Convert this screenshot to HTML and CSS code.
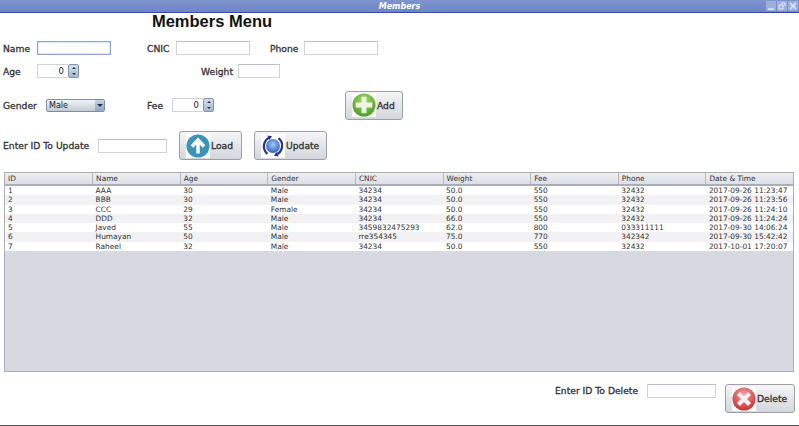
FILE: index.html
```html
<!DOCTYPE html>
<html>
<head>
    <title>Members</title>
    <link rel="stylesheet" href="styles.css">
</head>
<body>
    <!-- window title bar -->
    <div class="titlebar">
        <span class="titlebar-text">Members</span>
        <div class="winbtns">
            <span class="winbtn"><svg viewBox="0 0 10 10" width="10" height="10"><path d="M2 8h6" stroke="#e8eefa" stroke-width="1.4"/></svg></span>
            <span class="winbtn"><svg viewBox="0 0 10 10" width="10" height="10"><path d="M4 2h4v3M2 4h4v4H2z" fill="none" stroke="#e8eefa"/></svg></span>
            <span class="winbtn"><svg viewBox="0 0 10 10" width="10" height="10"><path d="M2 2l6 6M8 2L2 8" stroke="#e8eefa" stroke-width="1.3"/></svg></span>
        </div>
    </div>

    <h1>Members Menu</h1>

    <!-- form -->
    <div class="row row-first">
        <label class="lbl w34">Name</label>
        <input class="field w74 focused" type="text">
        <label class="lbl w29 ml36">CNIC</label>
        <input class="field w74" type="text">
        <label class="lbl w34 ml20">Phone</label>
        <input class="field w74" type="text">
    </div>

    <div class="row row-age">
        <label class="lbl w34">Age</label>
        <div class="spinner">
            <input class="spin-value" type="text" value="0">
            <div class="spin-btns"><span class="up"></span><span class="down"></span></div>
        </div>
        <label class="lbl w37 ml122">Weight</label>
        <input class="field w42" type="text">
    </div>

    <div class="row row-gender">
        <label class="lbl w43">Gender</label>
        <div class="combo">
            <span class="combo-text">Male</span>
            <span class="combo-arrow"></span>
        </div>
        <label class="lbl w25 ml42">Fee</label>
        <div class="spinner">
            <input class="spin-value" type="text" value="0">
            <div class="spin-btns"><span class="up"></span><span class="down"></span></div>
        </div>
        <button class="btn btn-add">
            <svg class="icon" viewBox="0 0 26 26">
                <defs><radialGradient id="g1" cx="50%" cy="30%" r="75%"><stop offset="0" stop-color="#a6d86a"/><stop offset="1" stop-color="#3f9a1e"/></radialGradient></defs>
                <circle cx="13" cy="13" r="12.500" fill="url(#g1)"/>
                <path d="M13 4v18M4 13h18" stroke="#eef5e4" stroke-width="5.500"/>
            </svg>
            Add
        </button>
    </div>

    <div class="row row-update">
        <label class="lbl w95">Enter ID To Update</label>
        <input class="field w69" type="text">
        <button class="btn btn-load">
            <svg class="icon" viewBox="0 0 26 26">
                <circle cx="13" cy="13" r="12.500" fill="#3a94b8"/>
                <path d="M13 21V8M6.500 13.500L13 6.500l6.500 7" fill="none" stroke="#fff" stroke-width="3.800"/>
            </svg>
            Load
        </button>
        <button class="btn btn-update">
            <svg class="icon" viewBox="0 0 26 26">
                <defs><radialGradient id="g2" cx="50%" cy="40%" r="60%"><stop offset="0" stop-color="#a9c8f2"/><stop offset="1" stop-color="#2d63c0"/></radialGradient></defs>
                <circle cx="13" cy="13" r="7.500" fill="url(#g2)"/>
                <path d="M10 3.500A10.500 10.500 0 0 0 7 21.500M16 22.500A10.500 10.500 0 0 0 19 4.500" fill="none" stroke="#27358c" stroke-width="2.400"/>
                <path d="M7 1.500l5 1-3 4zM19 24.500l-5-1 3-4z" fill="#27358c"/>
            </svg>
            Update
        </button>
    </div>

    <!-- members table -->
    <div class="table-wrap">
        <table>
            <thead>
                <tr><th>ID</th><th>Name</th><th>Age</th><th>Gender</th><th>CNIC</th><th>Weight</th><th>Fee</th><th>Phone</th><th>Date &amp; Time</th></tr>
            </thead>
            <tbody>
                <tr><td>1</td><td>AAA</td><td>30</td><td>Male</td><td>34234</td><td>50.0</td><td>550</td><td>32432</td><td>2017-09-26 11:23:47</td></tr>
                <tr><td>2</td><td>BBB</td><td>30</td><td>Male</td><td>34234</td><td>50.0</td><td>550</td><td>32432</td><td>2017-09-26 11:23:56</td></tr>
                <tr><td>3</td><td>CCC</td><td>29</td><td>Female</td><td>34234</td><td>50.0</td><td>550</td><td>32432</td><td>2017-09-26 11:24:10</td></tr>
                <tr><td>4</td><td>DDD</td><td>32</td><td>Male</td><td>34234</td><td>66.0</td><td>550</td><td>32432</td><td>2017-09-26 11:24:24</td></tr>
                <tr><td>5</td><td>Javed</td><td>55</td><td>Male</td><td>3459832475293</td><td>62.0</td><td>800</td><td>033311111</td><td>2017-09-30 14:06:24</td></tr>
                <tr><td>6</td><td>Humayan</td><td>50</td><td>Male</td><td>rre354345</td><td>75.0</td><td>770</td><td>342342</td><td>2017-09-30 15:42:42</td></tr>
                <tr><td>7</td><td>Raheel</td><td>32</td><td>Male</td><td>34234</td><td>50.0</td><td>550</td><td>32432</td><td>2017-10-01 17:20:07</td></tr>
            </tbody>
        </table>
    </div>

    <!-- delete -->
    <div class="row row-delete">
        <label class="lbl w83">Enter ID To Delete</label>
        <input class="field w69 ml9" type="text">
        <button class="btn btn-delete">
            <svg class="icon" viewBox="0 0 26 26">
                <defs><radialGradient id="g3" cx="50%" cy="30%" r="75%"><stop offset="0" stop-color="#f0a0a0"/><stop offset="1" stop-color="#c42a2a"/></radialGradient></defs>
                <circle cx="13" cy="13" r="12.500" fill="url(#g3)"/>
                <path d="M7 7l12 12M19 7L7 19" stroke="#fbeeee" stroke-width="4.500"/>
            </svg>
            Delete
        </button>
    </div>

    <div class="bottom-line"></div>
</body>
</html>
```

FILE: styles.css
```css
/* page */
body {
    margin: 0;
    height: 426px;
    overflow: hidden;
    background: #fff;
    font-family: 'DejaVu Sans', sans-serif;
    color: #222;
    display: flex;
    flex-direction: column;
}

/* title bar */
.titlebar {
    height: 12px;
    flex: none;
    display: flex;
    align-items: center;
    justify-content: center;
    position: relative;
    background: linear-gradient(to bottom, #7f95cf, #6c86c6);
    border-bottom: 1px solid #34509f;
}

.titlebar-text {
    color: #fff;
    font-size: 8px;
    font-weight: bold;
    font-style: italic;
}

.winbtns {
    position: absolute;
    right: 1px;
    top: 1px;
    display: flex;
    gap: 1px;
}

.winbtn {
    width: 10px;
    height: 10px;
    background: #9db0dc;
    display: block;
}

.winbtn svg {
    display: block;
}

/* heading */
h1 {
    margin: 0;
    width: 424px;
    height: 17px;
    line-height: 17px;
    text-align: center;
    font-family: 'Liberation Sans', sans-serif;
    font-size: 16.500px;
    font-weight: bold;
    color: #111;
}

/* rows */
.row {
    display: flex;
    align-items: center;
    padding-left: 3px;
    flex: none;
}

.row-first { margin-top: 11px; height: 14px; }
.row-age { margin-top: 9px; height: 14px; }
.row-gender { margin-top: 12px; height: 30px; }
.row-update { margin-top: 11px; height: 29px; }
.row-delete { margin-top: 12px; height: 29px; padding-left: 555px; align-items: flex-start; }

.row-delete .lbl { margin-top: 1px; }

.lbl {
    font-size: 9.200px;
    -webkit-text-stroke: 0.3px #333;
    color: #333;
    white-space: nowrap;
}

.w25 { width: 25px; }
.w29 { width: 29px; }
.w34 { width: 34px; }
.w37 { width: 37px; }
.w43 { width: 43px; }
.w83 { width: 83px; }
.w95 { width: 95px; }

/* text fields */
.field {
    box-sizing: border-box;
    height: 14px;
    padding: 0 2px;
    margin: 0;
    background: #fff;
    border: 1px solid #cfd2d6;
    border-top-color: #b9bcc2;
    border-radius: 0;
    outline: none;
}

.ml9 { margin-left: 9px; }
.ml20 { margin-left: 20px; }
.ml36 { margin-left: 36px; }
.ml42 { margin-left: 42px; }
.ml122 { margin-left: 122px; }

.w42 { width: 42px; }
.w69 { width: 69px; }
.w74 { width: 74px; }

.focused {
    border: 1px solid #8aa8cc;
    box-shadow: inset 0 0 0 0.5px #c5d5e8;
}

/* spinner */
.spinner {
    display: flex;
    width: 42px;
    height: 14px;
}

.spin-value {
    box-sizing: border-box;
    width: 31px;
    height: 14px;
    margin: 0;
    padding: 0 4px 0 0;
    border: 1px solid #cfd2d6;
    border-right: none;
    text-align: right;
    font-family: 'DejaVu Sans', sans-serif;
    font-size: 8.500px;
    color: #222;
    outline: none;
}

.spin-btns {
    box-sizing: border-box;
    width: 11px;
    height: 14px;
    display: flex;
    flex-direction: column;
    border: 1px solid #7f93a8;
    border-radius: 2px;
    background: linear-gradient(to bottom, #d5deea, #a9bbd1);
}

.spin-btns span {
    flex: 1;
    display: flex;
    align-items: center;
    justify-content: center;
}

.spin-btns .up::before {
    content: "";
    border: 2px solid transparent;
    border-top: none;
    border-bottom: 2px solid #26364a;
}

.spin-btns .down::before {
    content: "";
    border: 2px solid transparent;
    border-bottom: none;
    border-top: 2px solid #26364a;
}

/* combo box */
.combo {
    box-sizing: border-box;
    width: 59px;
    height: 13px;
    display: flex;
    align-items: center;
    justify-content: space-between;
    padding-left: 2px;
    border: 1px solid #7f8ea0;
    border-radius: 2px;
    background: linear-gradient(to bottom, #f1f3f6, #c3cad3);
    font-size: 8px;
    color: #222;
}

.combo-arrow {
    box-sizing: border-box;
    width: 9px;
    height: 11px;
    display: flex;
    align-items: center;
    justify-content: center;
    background: linear-gradient(to bottom, #c5d3e4, #8fa7c4);
}

.combo-arrow::before {
    content: "";
    border: 3px solid transparent;
    border-bottom: none;
    border-top: 3px solid #1f3350;
}

/* buttons */
.btn {
    box-sizing: border-box;
    height: 29px;
    display: flex;
    align-items: center;
    gap: 1px;
    padding: 0 0 0 6px;
    border: 1px solid #9a9ea5;
    border-radius: 3px;
    background: linear-gradient(to bottom, #f6f6f8, #d3d6db);
    font-family: 'DejaVu Sans', sans-serif;
    font-size: 9.200px;
    -webkit-text-stroke: 0.3px #333;
    color: #333;
    cursor: pointer;
}

.icon {
    width: 24px;
    height: 24px;
    flex: none;
    background: #fff;
}

.btn-add { width: 58px; margin-left: 131px; }
.btn-load { width: 63px; margin-left: 12px; }
.btn-update { width: 73px; margin-left: 12px; }
.btn-delete { width: 70px; margin-left: 9px; }

/* table */
.table-wrap {
    box-sizing: border-box;
    width: 790px;
    height: 200px;
    margin: 12px 0 0 4px;
    flex: none;
    background: #d6d9e0;
    border: 1px solid #a9adb5;
    overflow: hidden;
}

table {
    width: 789px;
    table-layout: fixed;
    border-collapse: collapse;
    font-size: 7.400px;
    color: #333;
}

th {
    height: 11px;
    padding: 0 0 0 3px;
    text-align: left;
    font-weight: normal;
    background: linear-gradient(to bottom, #eceef2, #dcdfe5);
    border-right: 1px solid #b4b7be;
    border-bottom: 2px solid #a9adb5;
}

td {
    height: 9.300px;
    line-height: 9.300px;
    padding: 0 0 0 3px;
    white-space: nowrap;
    overflow: hidden;
    background: #fff;
}

tbody tr:nth-child(even) td {
    background: #f2f2f4;
}

/* bottom edge of window */
.bottom-line {
    margin-top: 12px;
    height: 1px;
    flex: none;
    background: #555;
}
```
